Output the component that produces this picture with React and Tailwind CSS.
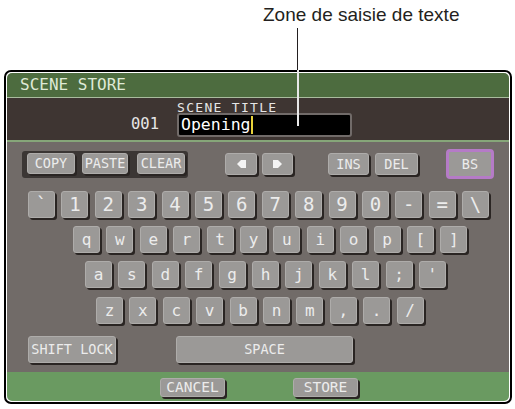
import React from 'react';

const lcd = "font-['DejaVu_Sans_Mono',monospace]";

const Key = ({ className = '', children }) => (
    <div
        className={`flex items-center justify-center rounded-[3px] border border-[#aeacaa] bg-[#9b9997] text-[#ececec] shadow-[2px_2px_0_#2a2523] ${className}`}
    >
        {children}
    </div>
);

const Arrow = ({ dir }) => (
    <svg width="9" height="8" viewBox="0 0 9 8">
        {dir === 'left' ? (
            <polygon points="0,4 4,0 9,0 9,8 4,8" fill="#f4f4f4" />
        ) : (
            <polygon points="9,4 5,0 0,0 0,8 5,8" fill="#f4f4f4" />
        )}
    </svg>
);

const numberRow = ['`', '1', '2', '3', '4', '5', '6', '7', '8', '9', '0', '-', '=', '\\'];
const qwertyRow = ['q', 'w', 'e', 'r', 't', 'y', 'u', 'i', 'o', 'p', '[', ']'];
const asdfRow = ['a', 's', 'd', 'f', 'g', 'h', 'j', 'k', 'l', ';', "'"];
const zxcvRow = ['z', 'x', 'c', 'v', 'b', 'n', 'm', ',', '.', '/'];

const KeyRow = ({ keys, className, textClass }) => (
    <div className={`flex h-[27px] gap-[6.4px] ${className}`}>
        {keys.map((k) => (
            <Key key={k} className={`h-[27px] w-[27px] ${textClass}`}>
                {k}
            </Key>
        ))}
    </div>
);

export default function App() {
    return (
        <div className={`relative h-[409px] w-[515px] overflow-hidden bg-white ${lcd}`}>
            {/* caption */}
            <div className="h-[70px] pl-[263px] pt-[5px] font-['Liberation_Sans',Arial,sans-serif] text-[19px] leading-[20px] text-[#231f20]">
                Zone de saisie de texte
            </div>

            {/* window */}
            <div className="ml-[4px] h-[334px] w-[508px] rounded-[7px] border-2 border-black bg-white p-px">
                <div className="flex h-full flex-col overflow-hidden rounded-[5px]">
                    <div className="h-[24px] bg-[#4d6c3f] pl-[13px] text-[16px] leading-[24px] text-[#dfe9d6]">
                        SCENE STORE
                    </div>
                    <div className="h-px bg-[#a9bc9e]" />

                    <div className="flex h-[42px] flex-col bg-[#3e3532]">
                        <div className="mt-[3px] h-[13px] pl-[170px] text-[13px] leading-[13px] tracking-[1.3px] text-[#e6e6e6]">
                            SCENE TITLE
                        </div>
                        <div className="-mt-px flex h-[24px] items-center pl-[124px]">
                            <span className="w-[46px] text-[15.5px] leading-none text-[#e6e6e6]">001</span>
                            <div className="flex h-[24px] w-[175px] items-center rounded-[3px] border-2 border-[#716b69] bg-black pl-[2px]">
                                <span className="text-[16.5px] leading-none text-white">Opening</span>
                                <span className="h-[18px] w-[2px] bg-[#e8d23a]" />
                            </div>
                        </div>
                    </div>
                    <div className="h-[2px] bg-[#86a679]" />

                    {/* keyboard */}
                    <div className="flex flex-1 flex-col bg-[#716b68]">
                        <div className="mt-[8px] flex h-[28px] items-center text-[13.5px]">
                            <div className="ml-[15px] flex h-[27px] w-[166px] items-start rounded-[3px] bg-[#3b3634] pl-[5px] pt-[2px]">
                                <Key className="h-[21px] w-[48px]">COPY</Key>
                                <Key className="ml-[7px] h-[21px] w-[46px]">PASTE</Key>
                                <Key className="ml-[9px] h-[21px] w-[48px]">CLEAR</Key>
                            </div>
                            <Key className="ml-[37px] h-[22px] w-[32px]">
                                <Arrow dir="left" />
                            </Key>
                            <Key className="ml-[5px] h-[22px] w-[31px]">
                                <Arrow dir="right" />
                            </Key>
                            <Key className="ml-[35px] h-[22px] w-[41px]">INS</Key>
                            <Key className="ml-[6px] h-[22px] w-[43px]">DEL</Key>
                            <div className="ml-[28px] flex h-[30px] w-[48px] items-center justify-center rounded-[4px] border-[3px] border-[#b57bc7] bg-[#9b9997] text-[#ececec]">
                                BS
                            </div>
                        </div>

                        <KeyRow keys={numberRow} className="ml-[21px] mt-[13px]" textClass="text-[19px]" />
                        <KeyRow keys={qwertyRow} className="ml-[66px] mt-[8px]" textClass="text-[16px]" />
                        <KeyRow keys={asdfRow} className="ml-[78px] mt-[8px]" textClass="text-[16px]" />
                        <KeyRow keys={zxcvRow} className="ml-[89px] mt-[9px]" textClass="text-[16px]" />

                        <div className="mt-[12px] flex h-[27px] text-[13.5px]">
                            <Key className="ml-[21px] h-[27px] w-[88px]">SHIFT LOCK</Key>
                            <Key className="ml-[60px] h-[27px] w-[177px]">SPACE</Key>
                        </div>
                    </div>

                    {/* footer */}
                    <div className="flex h-[29px] items-start bg-[#6a9a61] pt-[6px] text-[14.5px]">
                        <Key className="ml-[153px] h-[19px] w-[65px]">CANCEL</Key>
                        <Key className="ml-[68px] h-[19px] w-[65px]">STORE</Key>
                    </div>
                </div>
            </div>

            {/* leader line */}
            <div className="absolute left-[297px] top-[28px] h-[42px] w-px bg-[#231f20]" />
            <div className="absolute left-[297px] top-[70px] h-[56px] w-[2px] bg-[#e8e8e8]" />
        </div>
    );
}
